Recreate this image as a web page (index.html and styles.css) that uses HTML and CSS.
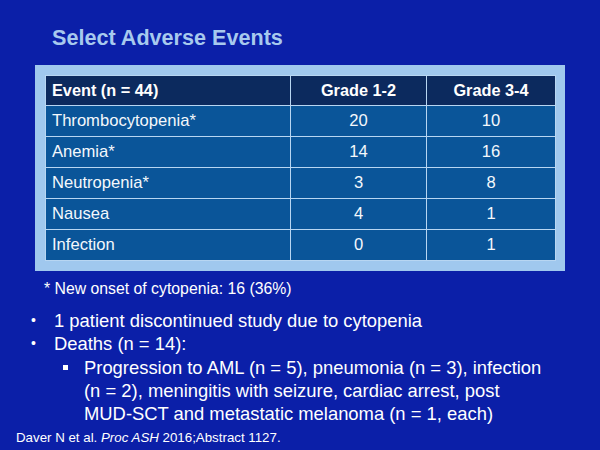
FILE: index.html
```html
<!DOCTYPE html>
<html>
<head>
<meta charset="utf-8">
<link rel="stylesheet" href="styles.css">
</head>
<body>
<div class="slide">
  <h1 class="title">Select Adverse Events</h1>
  <div class="frame">
    <table class="ae">
      <colgroup><col class="c1"><col class="c2"><col class="c3"></colgroup>
      <thead>
        <tr><th class="left">Event (n = 44)</th><th>Grade 1-2</th><th>Grade 3-4</th></tr>
      </thead>
      <tbody>
        <tr><td class="left">Thrombocytopenia*</td><td>20</td><td>10</td></tr>
        <tr><td class="left">Anemia*</td><td>14</td><td>16</td></tr>
        <tr><td class="left">Neutropenia*</td><td>3</td><td>8</td></tr>
        <tr><td class="left">Nausea</td><td>4</td><td>1</td></tr>
        <tr><td class="left">Infection</td><td>0</td><td>1</td></tr>
      </tbody>
    </table>
  </div>
  <p class="foot">* New onset of cytopenia: 16 (36%)</p>
  <ul class="bullets">
    <li>1 patient discontinued study due to cytopenia</li>
    <li>Deaths (n = 14):
      <ul class="sub">
        <li>Progression to AML (n = 5), pneumonia (n = 3), infection (n = 2), meningitis with seizure, cardiac arrest, post MUD-SCT and metastatic melanoma (n = 1, each)</li>
      </ul>
    </li>
  </ul>
  <p class="cite">Daver N et al. <i>Proc ASH</i> 2016;Abstract 1127.</p>
</div>
</body>
</html>
```
FILE: styles.css
```css
html, body {
  margin: 0;
  padding: 0;
}
body {
  width: 600px;
  height: 450px;
  overflow: hidden;
  background: #0b1fa8;
  font-family: "Liberation Sans", Arial, sans-serif;
  color: #ffffff;
}
.slide {
  display: flex;
  flex-direction: column;
  padding-top: 26px;
}
.title {
  margin: 0 0 0 52px;
  font-size: 21.6px;
  line-height: 24px;
  font-weight: bold;
  color: #a7c9ee;
}
.frame {
  margin: 15px 0 0 35px;
  width: 510px;
  padding: 10px;
  background: #a0c8ee;
}
.ae {
  width: 510px;
  border-collapse: collapse;
  table-layout: fixed;
}
.c1 { width: 245px; }
.c2 { width: 136px; }
.c3 { width: 129px; }
.ae th, .ae td {
  border: 1px solid #b8d6f2;
  text-align: center;
  padding: 0 6px;
}
.ae th {
  background: #0c2a5e;
  height: 29px;
  font-size: 16.3px;
  font-weight: bold;
}
.ae td {
  background: #0a5599;
  height: 30px;
  font-size: 16.6px;
  color: #f4f8fc;
}
.ae .left {
  text-align: left;
}
.foot {
  margin: 9px 0 0 44px;
  font-size: 15.8px;
  line-height: 18px;
}
.bullets {
  list-style: none;
  margin: 11px 0 0 0;
  padding: 0;
  font-size: 18.4px;
  line-height: 23.3px;
}
.bullets > li {
  position: relative;
  padding-left: 54px;
}
.bullets > li::before {
  content: "•";
  position: absolute;
  left: 31px;
  font-size: 14px;
}
.sub {
  list-style: none;
  margin: 0;
  padding: 0;
}
.sub > li {
  position: relative;
  padding-left: 30px;
  margin-right: 50px;
}
.sub > li::before {
  content: "";
  position: absolute;
  left: 9px;
  top: 9px;
  width: 5px;
  height: 5px;
  background: #ffffff;
}
.cite {
  margin: 5px 0 0 16px;
  font-size: 13.3px;
  line-height: 16px;
}
```
